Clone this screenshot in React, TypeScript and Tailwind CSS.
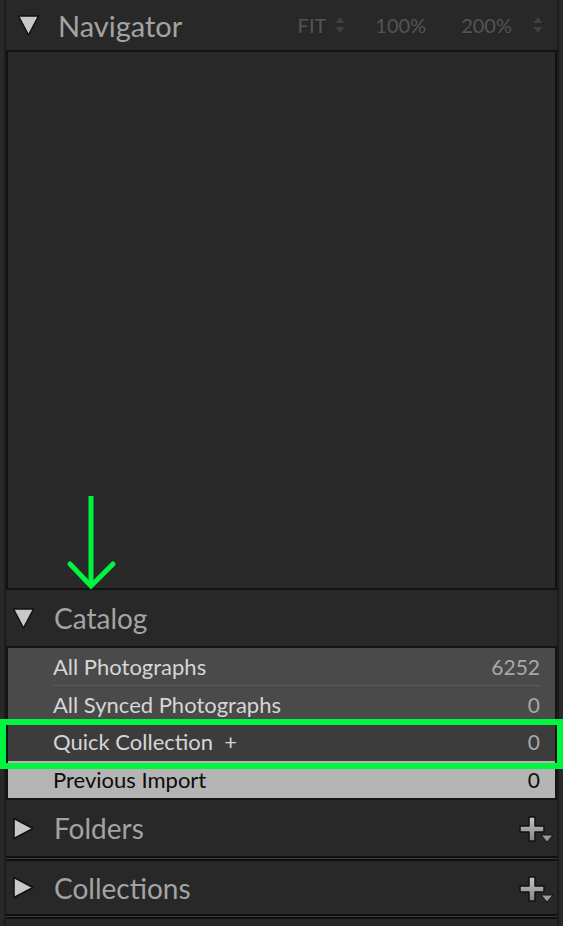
import React from "react";

function Tri({ dir }: { dir: "down" | "right" }) {
  return (
    <svg width="23" height="23" viewBox="0 0 23 23">
      {dir === "down" ? (
        <polygon points="1.5,2 21.5,2 11.5,21" fill="#c8c8c8" stroke="#111" strokeWidth="1.5" strokeLinejoin="round" />
      ) : (
        <polygon points="2,1.5 21,11.5 2,21.5" fill="#c8c8c8" stroke="#111" strokeWidth="1.5" strokeLinejoin="round" />
      )}
    </svg>
  );
}

function UpDown() {
  return (
    <svg width="10" height="18" viewBox="0 0 10 18">
      <polygon points="5,1 9.5,7 0.5,7" fill="#404040" />
      <polygon points="0.5,11 9.5,11 5,17" fill="#404040" />
    </svg>
  );
}

function PlusMenu() {
  return (
    <svg width="36" height="32" viewBox="0 0 36 32">
      <defs>
        <linearGradient id="pg" x1="0" y1="0" x2="0" y2="1">
          <stop offset="0" stopColor="#c4c4c4" />
          <stop offset="1" stopColor="#858585" />
        </linearGradient>
      </defs>
      <path d="M10 2h6v9h9v6h-9v9h-6v-9H1v-6h9z" fill="url(#pg)" stroke="#111" strokeWidth="1.5" strokeLinejoin="round" />
      <polygon points="22,20 34,20 28,27" fill="#9a9a9a" stroke="#111" strokeWidth="1" strokeLinejoin="round" />
    </svg>
  );
}

function Header({ title, dir, plus, h }: { title: string; dir: "down" | "right"; plus?: boolean; h: string }) {
  return (
    <div className={`flex items-center ${h}`}>
      <div className="w-[48px] pl-[6px] flex items-center">
        <Tri dir={dir} />
      </div>
      <span className="text-[28px] text-[#a3a3a3] leading-none">{title}</span>
      {plus && (
        <div className="ml-auto mr-[2px] mt-[6px]">
          <PlusMenu />
        </div>
      )}
    </div>
  );
}

function Sep() {
  return <div className="h-[5px] border-y-2 border-[#101010] bg-[#3a3a3a]" />;
}

export default function App() {
  const rows = [
    { name: "All Photographs", count: "6252", bg: "bg-[#4a4a4a]", text: "text-[#d6d6d6]", num: "text-[#a8a8a8]" },
    { name: "All Synced Photographs", count: "0", bg: "bg-[#4a4a4a]", text: "text-[#d6d6d6]", num: "text-[#a8a8a8]" },
    { name: "Quick Collection  +", count: "0", bg: "bg-[#3c3c3c]", text: "text-[#d6d6d6]", num: "text-[#a8a8a8]" },
    { name: "Previous Import", count: "0", bg: "bg-[#b4b4b4]", text: "text-[#0c0c0c]", num: "text-[#0c0c0c]" },
  ];

  return (
    <div className="relative w-[563px] h-[926px] overflow-hidden bg-[#282828] font-['Lato','Noto_Sans',sans-serif]">
      <div className="h-full mx-[4px] border-x-2 border-[#1c1c1c]">
        {/* Navigator */}
        <div className="flex items-center h-[50px]">
          <div className="w-[52px] pl-[11px] flex items-center">
            <Tri dir="down" />
          </div>
          <span className="text-[29px] text-[#a3a3a3] leading-none">Navigator</span>
          <div className="ml-auto flex items-center text-[20px] text-[#545454] mr-[14px]">
            <span>FIT</span>
            <span className="ml-[9px]"><UpDown /></span>
            <span className="ml-[30px]">100%</span>
            <span className="ml-[35px]">200%</span>
            <span className="ml-[21px]"><UpDown /></span>
          </div>
        </div>
        <div className="h-[540px] border-2 border-[#121212] bg-[#292929]" />

        {/* Catalog */}
        <Header title="Catalog" dir="down" h="h-[56px]" />
        <div className="border-2 border-[#141414]">
          {rows.map((r, i) => (
            <div key={r.name} className={`${r.bg} h-[37.5px] flex items-center pl-[45px] pr-[15px]`}>
              <div className={`flex-1 flex items-center h-full ${i === 0 ? "border-b border-[#5a5a5a]" : ""}`}>
                <span className={`text-[22px] ${r.text} whitespace-pre`}>{r.name}</span>
                <span className={`ml-auto text-[21px] ${r.num}`}>{r.count}</span>
              </div>
            </div>
          ))}
        </div>

        {/* Folders / Collections */}
        <Header title="Folders" dir="right" plus h="h-[56px]" />
        <Sep />
        <Header title="Collections" dir="right" plus h="h-[53px]" />
        <Sep />
      </div>

      {/* annotation: green arrow */}
      <svg className="absolute left-[66px] top-[494px]" width="54" height="98" viewBox="0 0 54 98">
        <line x1="25" y1="2" x2="25" y2="92" stroke="#00f53f" strokeWidth="5" />
        <polyline points="4,70 25,92 47,70" fill="none" stroke="#00f53f" strokeWidth="5" strokeLinecap="round" />
      </svg>

      {/* annotation: green highlight box */}
      <div className="absolute left-0 top-[719px] w-[563px] h-[50px] border-[6px] border-[#00f53f]" />
    </div>
  );
}
